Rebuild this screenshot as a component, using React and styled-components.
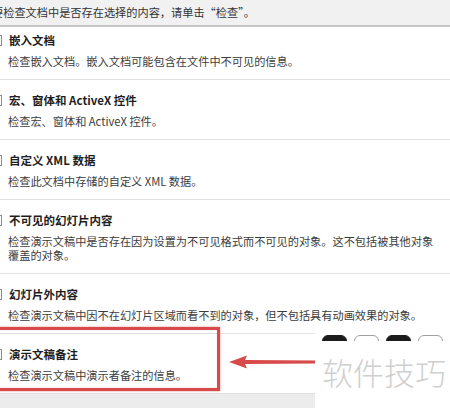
import React from "react";
import styled, { createGlobalStyle } from "styled-components";

const GlobalStyle = createGlobalStyle`
  html, body { margin: 0; padding: 0; background: #ececec; }
  body { overflow: hidden; font-family: "Noto Sans CJK SC", "Noto Sans", sans-serif; }
`;

const Page = styled.div`
  position: relative;
  width: 450px;
  height: 408px;
  overflow: hidden;
  background: #ececec;
  display: flex;
  flex-direction: column;
`;

const TopBar = styled.div`
  height: 25px;
  flex: none;
  display: flex;
  align-items: center;
  background: #f1f1f1;
  border-bottom: 2px solid #c6c6c6;
  font-size: 11.2px;
  color: #333;
  white-space: nowrap;
`;

const TopText = styled.span`
  margin-left: -8px;
  margin-top: -1px;
`;

const List = styled.div`
  background: #fff;
  flex: none;
`;

const Row = styled.div`
  padding: ${(p) => (p.$first ? "6px" : "13px")} 0 11px 0;
  border-bottom: 1px solid #e1e1e1;
`;

const Header = styled.div`
  display: flex;
  align-items: center;
  gap: 7px;
  margin-left: -9px;
  height: 14px;
`;

const Check = styled.span`
  width: 9px;
  height: 9px;
  border: 1px solid #8c8c8c;
  background: #fff;
  flex: none;
`;

const Title = styled.span`
  font-size: 11.5px;
  font-weight: 700;
  color: #1e1e1e;
  line-height: 14px;
  white-space: nowrap;
`;

const Desc = styled.div`
  margin-top: 7px;
  padding-left: 8px;
  max-width: 430px;
  font-size: 11.2px;
  line-height: 14px;
  color: #3c3c3c;
`;

const Highlight = styled.div`
  position: absolute;
  left: -6px;
  top: 327px;
  width: 220px;
  height: 58px;
  border: 3px solid #d84a4a;
  box-shadow: 0 0 2px rgba(210, 60, 60, 0.6), inset 0 0 1px rgba(210, 60, 60, 0.5);
`;

const Arrow = styled.svg`
  position: absolute;
  left: 228px;
  top: 354px;
`;

const Watermark = styled.div`
  position: absolute;
  left: 315px;
  top: 324px;
  right: 0;
  bottom: 0;
  background: #fff;
  display: flex;
  flex-direction: column;
  align-items: flex-start;
  padding: 11px 0 0 7px;
`;

const Chips = styled.div`
  display: flex;
  align-items: flex-start;
  gap: 7px;
  height: 6px;
  overflow: hidden;
`;

const Chip = styled.span`
  display: block;
  width: 25px;
  height: 12px;
  border-radius: 7px;
  box-sizing: border-box;
  background: ${(p) => (p.$dark ? "#1c1c1c" : "#fff")};
  border: 1px solid ${(p) => (p.$dark ? "#1c1c1c" : "#a0a0a0")};
`;

const MarkText = styled.div`
  margin-top: 13px;
  font-size: 31px;
  line-height: 36px;
  color: #cfcfcf;
  font-weight: 300;
  white-space: nowrap;
`;

const items = [
  { t: "嵌入文档", d: "检查嵌入文档。嵌入文档可能包含在文件中不可见的信息。" },
  { t: "宏、窗体和 ActiveX 控件", d: "检查宏、窗体和 ActiveX 控件。" },
  { t: "自定义 XML 数据", d: "检查此文档中存储的自定义 XML 数据。" },
  {
    t: "不可见的幻灯片内容",
    d: "检查演示文稿中是否存在因为设置为不可见格式而不可见的对象。这不包括被其他对象覆盖的对象。",
  },
  { t: "幻灯片外内容", d: "检查演示文稿中因不在幻灯片区域而看不到的对象，但不包括具有动画效果的对象。" },
  { t: "演示文稿备注", d: "检查演示文稿中演示者备注的信息。" },
];

export default function App() {
  return (
    <>
      <GlobalStyle />
      <Page>
        <TopBar>
          <TopText>要检查文档中是否存在选择的内容，请单击“检查”。</TopText>
        </TopBar>
        <List>
          {items.map((it, i) => (
            <Row key={i} $first={i === 0}>
              <Header>
                <Check />
                <Title>{it.t}</Title>
              </Header>
              <Desc>{it.d}</Desc>
            </Row>
          ))}
        </List>
        <Highlight />
        <Arrow width="90" height="16" viewBox="0 0 90 16">
          <path d="M1 8 L19 1.5 L17 6 L88 6.5 L88 9.5 L17 10 L19 14.5 Z" fill="#d84a4a" />
        </Arrow>
        <Watermark>
          <Chips>
            <Chip $dark />
            <Chip />
            <Chip $dark />
            <Chip />
          </Chips>
          <MarkText>软件技巧</MarkText>
        </Watermark>
      </Page>
    </>
  );
}
